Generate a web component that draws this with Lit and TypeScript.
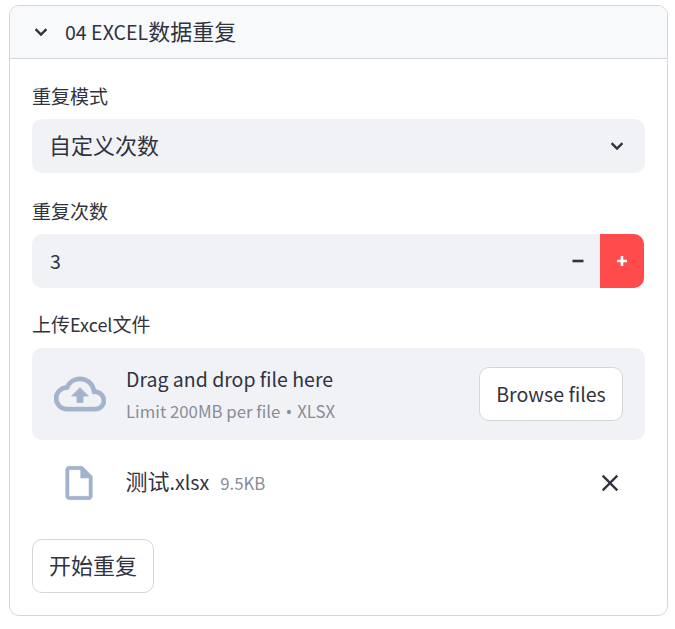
import { LitElement, html, css } from "lit";
import { customElement } from "lit/decorators.js";

@customElement("app-root")
export class AppRoot extends LitElement {
  static styles = css`
    :host {
      display: block;
      width: 675px;
      height: 629px;
      background: #fff;
      padding: 5px 7px 0 9px;
      box-sizing: border-box;
      font-family: "Noto Sans CJK SC", "Noto Sans", sans-serif;
      color: #31333f;
    }
    .card {
      width: 659px;
      height: 611px;
      box-sizing: border-box;
      border: 1px solid #d5d6da;
      border-radius: 10px;
      overflow: hidden;
      background: #fff;
    }
    .head {
      height: 53px;
      box-sizing: border-box;
      background: #f8f9fb;
      border-bottom: 1px solid #d5d6da;
      display: flex;
      align-items: center;
      padding-left: 19px;
      gap: 12px;
      font-size: 22px;
    }
    .head svg { width: 24px; height: 24px; display: block; }
    .head .t, .select .t, .start .t { margin-bottom: 4px; }
    .lat { font-size: 0.89em; }
    .body {
      padding: 0 22px;
      display: flex;
      flex-direction: column;
    }
    .label {
      font-size: 19px;
      line-height: 28px;
      height: 28px;
    }
    .label .lat { font-size: 18px; }
    .l1 { margin-top: 23px; }
    .l2 { margin-top: 24px; }
    .l3 { margin-top: 22px; }
    .select {
      margin-top: 9px;
      width: 613px;
      height: 54px;
      border-radius: 10px;
      background: #f0f2f6;
      display: flex;
      align-items: center;
      justify-content: space-between;
      padding: 0 16px 0 17px;
      box-sizing: border-box;
      font-size: 22px;
    }
    .select svg { width: 24px; height: 24px; display: block; }
    .number {
      margin-top: 9px;
      width: 612px;
      height: 54px;
      border-radius: 10px;
      overflow: hidden;
      background: #f0f2f6;
      display: flex;
      align-items: center;
      font-size: 19.6px;
    }
    .val { flex: 1; padding-left: 18px; margin-bottom: 2px; }
    .step {
      width: 44px;
      height: 54px;
      display: flex;
      align-items: center;
      justify-content: center;
    }
    .step svg { width: 12px; height: 12px; display: block; }
    .plus { background: #ff4b4b; color: #fff; }
    .drop {
      margin-top: 10px;
      width: 613px;
      height: 92px;
      border-radius: 10px;
      background: #f0f2f6;
      display: flex;
      align-items: center;
      padding: 0 22px;
      box-sizing: border-box;
    }
    .cloud { width: 52px; height: 52px; display: block; flex: none; }
    .drop-text { flex: 1; margin-left: 20px; display: flex; flex-direction: column; }
    .dt1 { font-size: 19.5px; line-height: 30px; }
    .dt2 { font-size: 16.8px; line-height: 26px; color: #8a8d97; margin-top: 4px; }
    .bullet { font-family: "Noto Sans", sans-serif; margin: 0 1.5px; }
    .btn {
      background: #fff;
      border: 1px solid #d5d6da;
      border-radius: 10px;
      box-sizing: border-box;
      color: #31333f;
      display: flex;
      align-items: center;
      justify-content: center;
    }
    .browse { width: 144px; height: 54px; font-size: 19.6px; }
    .browse span { margin-bottom: 1px; }
    .file {
      margin-top: 20px;
      height: 46px;
      display: flex;
      align-items: center;
      width: 613px;
    }
    .doc { width: 40px; height: 40px; margin-left: 26.5px; display: block; flex: none; }
    .fname { margin-left: 27px; font-size: 22px; margin-bottom: 6px; }
    .fsize { margin-left: 11px; font-size: 16.8px; color: #8a8d97; margin-bottom: 1px; }
    .x { width: 28px; height: 28px; margin-left: auto; margin-right: 21.5px; display: block; }
    .start {
      margin-top: 33px;
      width: 122px;
      height: 54px;
      font-size: 22px;
    }
  `;

  render() {
    const chevron = html`<svg viewBox="0 0 24 24" fill="currentColor"><path d="M16.59 8.59 12 13.17 7.41 8.59 6 10l6 6 6-6z" stroke="currentColor" stroke-width=".5"/></svg>`;
    return html`
      <div class="card">
        <div class="head">${chevron}<span class="t"><span class="lat">04 EXCEL</span>数据重复</span></div>
        <div class="body">
          <div class="label l1">重复模式</div>
          <div class="select"><span class="t">自定义次数</span>${chevron}</div>
          <div class="label l2">重复次数</div>
          <div class="number">
            <span class="val">3</span>
            <div class="step">
              <svg viewBox="0 0 12 12"><rect x="0.5" y="4.7" width="11" height="2.6" fill="currentColor"/></svg>
            </div>
            <div class="step plus">
              <svg viewBox="0 0 12 12"><path d="M4.7 1h2.6v3.7H11v2.6H7.3V11H4.7V7.3H1V4.7h3.7z" fill="currentColor"/></svg>
            </div>
          </div>
          <div class="label l3">上传<span class="lat">Excel</span>文件</div>
          <div class="drop">
            <svg class="cloud" viewBox="0 0 24 24" fill="#a3b2cd" stroke="#a3b2cd" stroke-width=".2">
              <path d="M19.35 10.04A7.49 7.49 0 0 0 12 4C9.11 4 6.6 5.64 5.35 8.04A5.994 5.994 0 0 0 0 14c0 3.31 2.69 6 6 6h13c2.76 0 5-2.24 5-5 0-2.64-2.05-4.78-4.65-4.96zM19 18H6c-2.21 0-4-1.79-4-4 0-2.05 1.53-3.76 3.56-3.97l1.07-.11.5-.95A5.469 5.469 0 0 1 12 6c2.62 0 4.88 1.86 5.39 4.43l.3 1.5 1.53.11A2.98 2.98 0 0 1 22 15c0 1.65-1.35 3-3 3z"/>
              <path d="M8 13h2.55v3h2.9v-3H16l-4-4z"/>
            </svg>
            <div class="drop-text">
              <span class="dt1">Drag and drop file here</span>
              <span class="dt2">Limit 200MB per file <span class="bullet">•</span> XLSX</span>
            </div>
            <div class="btn browse"><span>Browse files</span></div>
          </div>
          <div class="file">
            <svg class="doc" viewBox="0 0 24 24" fill="#a3b2cd" stroke="#a3b2cd" stroke-width=".3">
              <path d="M14 2H6c-1.1 0-1.99.9-1.99 2L4 20c0 1.1.89 2 1.99 2H18c1.1 0 2-.9 2-2V8l-6-6zM6 20V4h7v5h5v11H6z"/>
            </svg>
            <span class="fname">测试<span class="lat">.xlsx</span></span>
            <span class="fsize">9.5KB</span>
            <svg class="x" viewBox="0 0 24 24" fill="currentColor">
              <path d="M19 6.41 17.59 5 12 10.59 6.41 5 5 6.41 10.59 12 5 17.59 6.41 19 12 13.41 17.59 19 19 17.59 13.41 12z"/>
            </svg>
          </div>
          <div class="btn start"><span class="t">开始重复</span></div>
        </div>
      </div>
    `;
  }
}
